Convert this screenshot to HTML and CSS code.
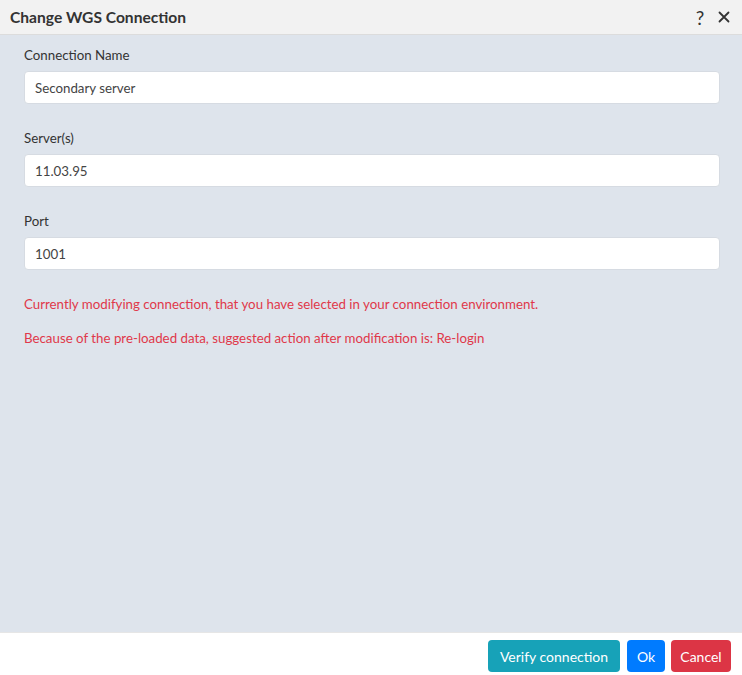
FILE: index.html
```html
<!DOCTYPE html>
<html lang="en">
<head>
<meta charset="utf-8">
<title>Change WGS Connection</title>
<link rel="stylesheet" href="styles.css">
</head>
<body>
<div class="dialog">
  <header class="dialog-header">
    <h1 class="dialog-title">Change WGS Connection</h1>
    <div class="dialog-tools">
      <button class="tool-btn" type="button" aria-label="Help">?</button>
      <button class="tool-btn" type="button" aria-label="Close">
        <svg width="12" height="12" viewBox="0 0 12 12"><path d="M1.5 1.5L10.5 10.5M10.5 1.5L1.5 10.5" stroke="#333" stroke-width="1.8" stroke-linecap="round"/></svg>
      </button>
    </div>
  </header>
  <main class="dialog-body">
    <div class="field">
      <label class="field-label" for="conn-name">Connection Name</label>
      <input class="field-input" id="conn-name" type="text" value="Secondary server">
    </div>
    <div class="field">
      <label class="field-label" for="servers">Server(s)</label>
      <input class="field-input" id="servers" type="text" value="11.03.95">
    </div>
    <div class="field">
      <label class="field-label" for="port">Port</label>
      <input class="field-input" id="port" type="text" value="1001">
    </div>
    <p class="warning">Currently modifying connection, that you have selected in your connection environment.</p>
    <p class="warning">Because of the pre-loaded data, suggested action after modification is: Re-login</p>
  </main>
  <footer class="dialog-footer">
    <button class="btn btn-info" type="button">Verify connection</button>
    <button class="btn btn-primary" type="button">Ok</button>
    <button class="btn btn-danger" type="button">Cancel</button>
  </footer>
</div>
</body>
</html>
```

FILE: styles.css
```css
html, body {
  margin: 0;
  padding: 0;
  height: 100%;
}

body {
  font-family: Lato, "Open Sans", sans-serif;
  font-size: 13.3px;
  color: #333;
  background: #fff;
}

.dialog {
  display: flex;
  flex-direction: column;
  height: 675px;
  width: 742px;
}

.dialog-header {
  height: 34px;
  flex: none;
  display: flex;
  align-items: center;
  justify-content: space-between;
  padding: 0 10px;
  background: #f2f2f2;
  border-bottom: 1px solid #dcdcdc;
}

.dialog-title {
  margin: 0;
  font-size: 15.6px;
  font-weight: 700;
  color: #333;
}

.dialog-tools {
  display: flex;
  align-items: center;
  gap: 8px;
  margin-right: 0;
}

.tool-btn {
  border: 0;
  background: none;
  padding: 0;
  font-family: inherit;
  font-size: 19px;
  line-height: 1;
  color: #333;
  width: 16px;
  height: 20px;
  display: flex;
  align-items: center;
  justify-content: center;
}

.dialog-body {
  flex: 1;
  background: #dee4ec;
  padding: 10px 22px 0 24px;
}

.field {
  display: flex;
  flex-direction: column;
  margin-bottom: 24px;
}

.field-label {
  line-height: 20px;
  margin-bottom: 6px;
  color: #333;
}

.field-input {
  height: 33px;
  box-sizing: border-box;
  border: 1px solid #d6dbe2;
  border-radius: 4px;
  background: #fff;
  padding: 0 10px;
  font-family: inherit;
  font-size: 13.3px;
  color: #444;
  outline: none;
}

.warning {
  margin: 0 0 14px;
  line-height: 20px;
  color: #e0384a;
}

.field + .warning {
  margin-top: 1px;
}

.dialog-footer {
  height: 42px;
  flex: none;
  display: flex;
  align-items: center;
  justify-content: flex-end;
  gap: 6px;
  padding: 0 11px 0 0;
  background: #fff;
  border-top: 1px solid #e6e6e6;
}

.btn {
  height: 32px;
  border: 0;
  border-radius: 4px;
  padding: 0;
  font-family: inherit;
  font-size: 14px;
  color: #fff;
  margin-top: 4px;
}

.btn-info { background: #17a2b8; width: 132px; margin-right: 1px; }
.btn-primary { background: #007bff; width: 38px; }
.btn-danger { background: #dc3545; width: 60px; }
```
